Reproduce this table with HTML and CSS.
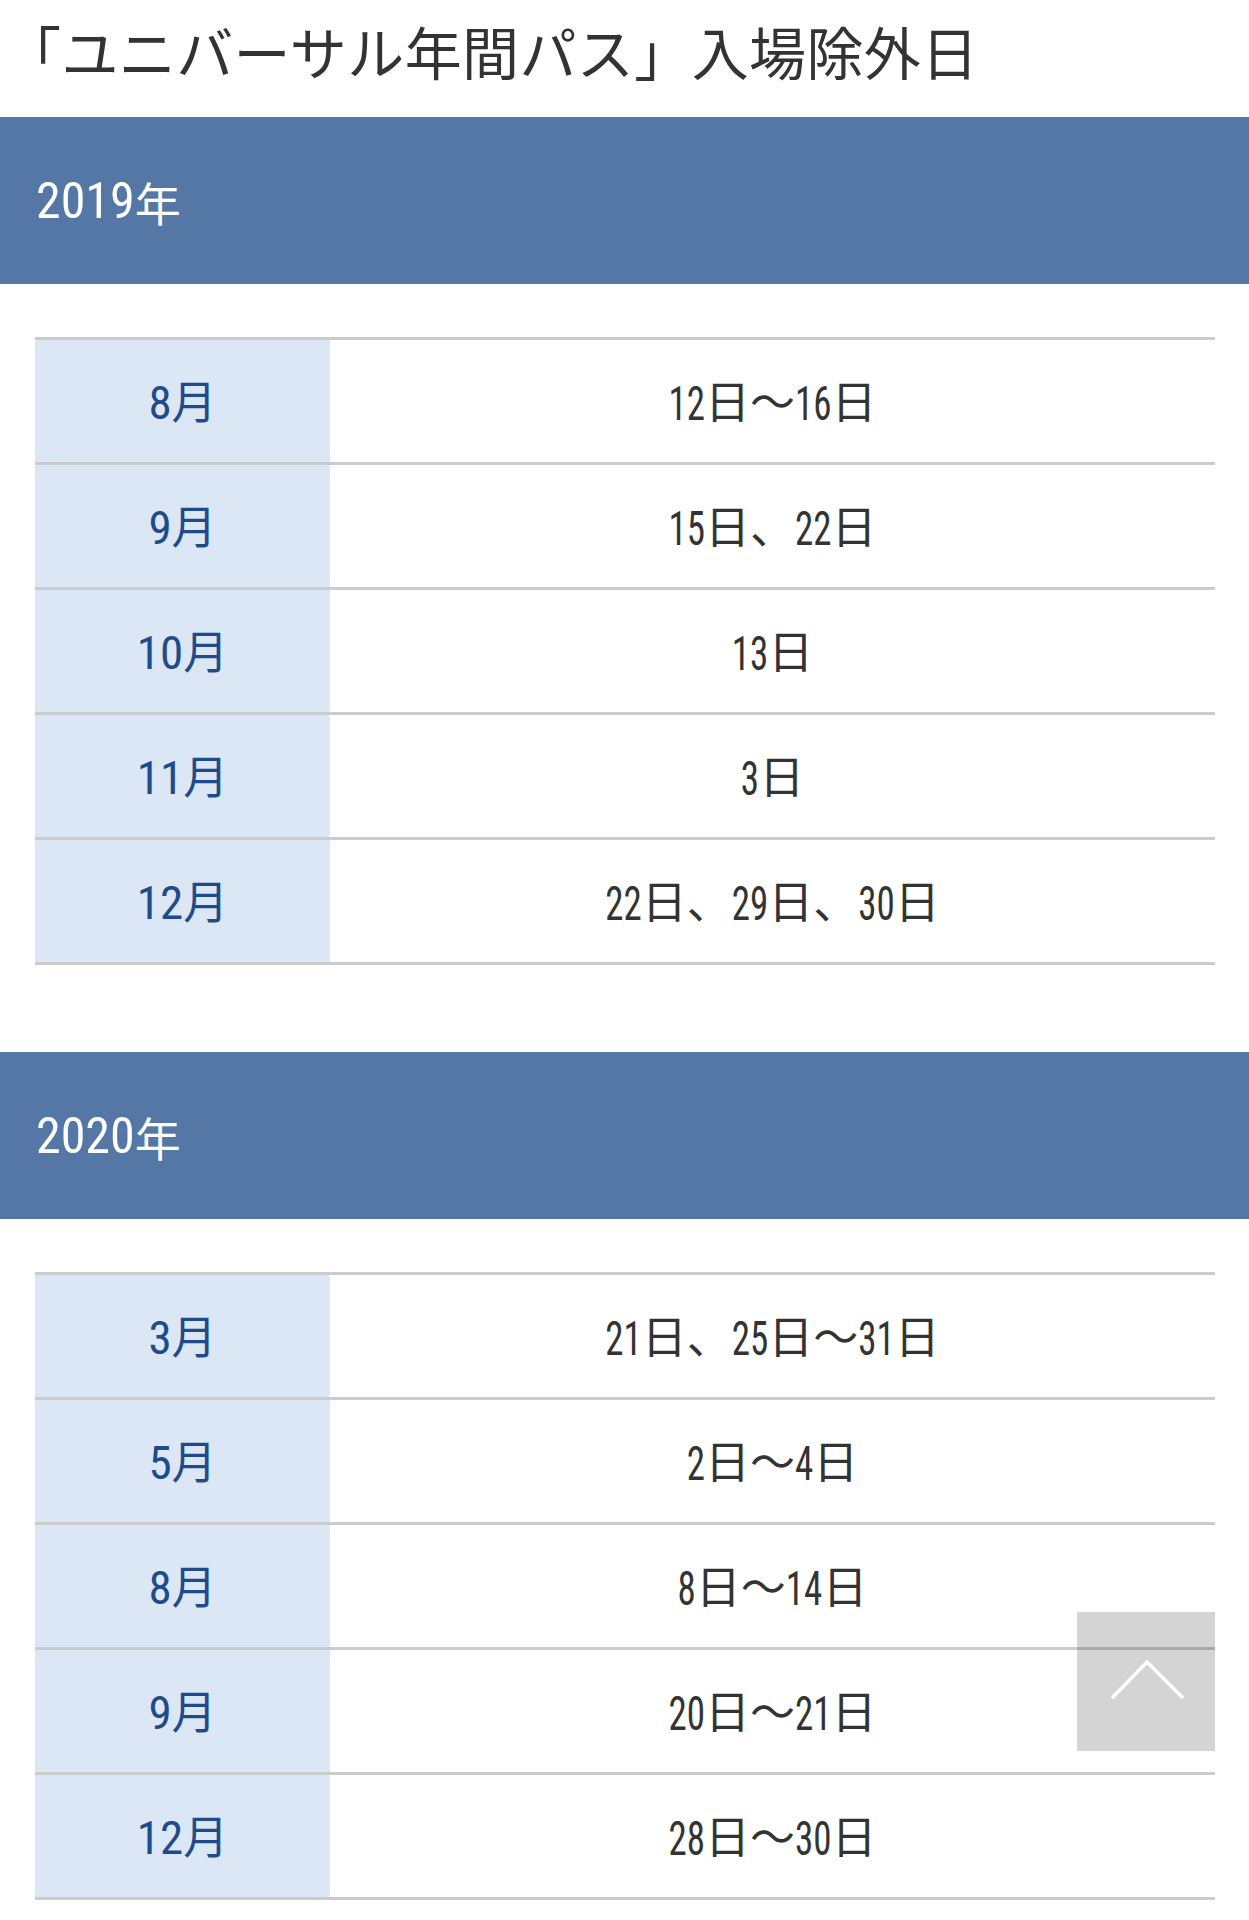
FILE: index.html
```html
<!DOCTYPE html>
<html lang="ja">
<head>
<meta charset="utf-8">
<title>「ユニバーサル年間パス」入場除外日</title>
<link rel="stylesheet" href="styles.css">
</head>
<body>
<h1 class="page-title">「ユニバーサル年間パス」入場除外日</h1>

<section class="year">
  <h2 class="year-head"><span class="num">2019</span>年</h2>
  <table class="days">
    <tr><th><span class="num">8</span>月</th><td><span class="num">12</span>日〜<span class="num">16</span>日</td></tr>
    <tr><th><span class="num">9</span>月</th><td><span class="num">15</span>日、<span class="num">22</span>日</td></tr>
    <tr><th><span class="num">10</span>月</th><td><span class="num">13</span>日</td></tr>
    <tr><th><span class="num">11</span>月</th><td><span class="num">3</span>日</td></tr>
    <tr><th><span class="num">12</span>月</th><td><span class="num">22</span>日、<span class="num">29</span>日、<span class="num">30</span>日</td></tr>
  </table>
</section>

<section class="year year-next">
  <h2 class="year-head"><span class="num">2020</span>年</h2>
  <table class="days">
    <tr><th><span class="num">3</span>月</th><td><span class="num">21</span>日、<span class="num">25</span>日〜<span class="num">31</span>日</td></tr>
    <tr><th><span class="num">5</span>月</th><td><span class="num">2</span>日〜<span class="num">4</span>日</td></tr>
    <tr><th><span class="num">8</span>月</th><td><span class="num">8</span>日〜<span class="num">14</span>日</td></tr>
    <tr><th><span class="num">9</span>月</th><td><span class="num">20</span>日〜<span class="num">21</span>日</td></tr>
    <tr><th><span class="num">12</span>月</th><td><span class="num">28</span>日〜<span class="num">30</span>日</td></tr>
  </table>
</section>

<a class="to-top" href="#" aria-label="ページの先頭へ">
  <svg class="to-top-icon" width="138" height="139" viewBox="0 0 138 139" aria-hidden="true">
    <polyline points="35,86 70,50 106,86" fill="none" stroke="#fff" stroke-width="3.5"/>
  </svg>
</a>
</body>
</html>
```

FILE: styles.css
```css
html, body {
  margin: 0;
  padding: 0;
  background: #fff;
}

body {
  font-family: "Noto Sans CJK JP", sans-serif;
  color: #333;
}

.page-title {
  margin: 0;
  padding: 22px 0 38px 4px;
  font-size: 57px;
  line-height: 57px;
  letter-spacing: 0.4px;
  font-weight: 400;
  color: #333;
  white-space: nowrap;
}

/* narrow figures */
.num {
  display: inline-block;
  font-family: "Roboto Condensed", "Roboto", sans-serif;
  font-stretch: condensed;
  line-height: 1;
}

.year-head {
  margin: 0;
  height: 167px;
  display: flex;
  align-items: center;
  padding-left: 36px;
  background: #5577a6;
  color: #fff;
  font-size: 46px;
  font-weight: 400;
}

.year-head .num {
  font-size: 50px;
}

.days {
  margin: 53px 34px 0 35px;
  width: calc(100% - 69px);
  border-collapse: collapse;
  border-top: 3px solid #cccccc;
}

.days tr {
  border-bottom: 3px solid #cccccc;
}

.days th,
.days td {
  height: 122px;
  padding: 0;
  text-align: center;
  vertical-align: middle;
  font-size: 45px;
  font-weight: 400;
  line-height: 1;
}

.days th {
  width: 295px;
  background: #dce7f6;
  color: #1f4b8c;
}

.days th .num {
  font-size: 47px;
}

.days td {
  color: #333;
}

.days td .num {
  font-size: 37px;
  transform: translateY(-3px) scaleY(1.32);
}

.year-next {
  margin-top: 87px;
}

.to-top {
  position: fixed;
  right: 34px;
  bottom: 169px;
  width: 138px;
  height: 139px;
  background: rgba(0, 0, 0, 0.17);
  display: block;
}

.to-top-icon {
  display: block;
}
```
